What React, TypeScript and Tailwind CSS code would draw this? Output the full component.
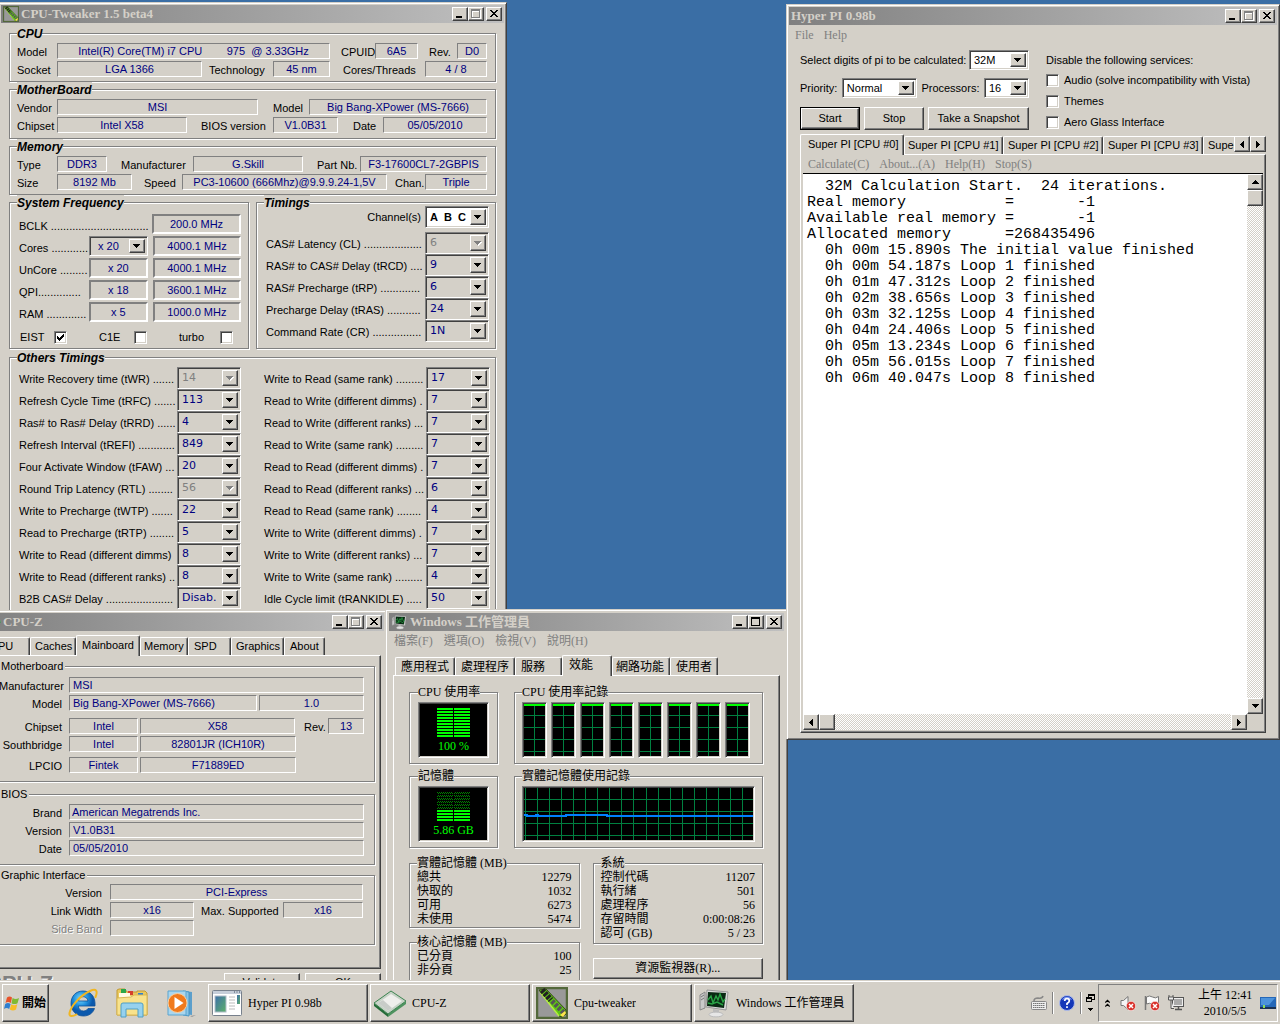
import React from "react";
import clsx from "clsx";

const RAISED = "bg-[#d4d0c8] border border-t-white border-l-white border-r-[#404040] border-b-[#404040] shadow-[inset_-1px_-1px_0_#808080]";
const SUNKEN = "border border-t-[#808080] border-l-[#808080] border-r-white border-b-white";
const DEEP = "border border-t-[#808080] border-l-[#808080] border-r-white border-b-white shadow-[inset_1px_1px_0_#404040,inset_-1px_-1px_0_#d4d0c8]";
const SANS = "font-['Liberation_Sans','Noto_Sans_CJK_TC',sans-serif]";
const SERIF = "font-['Liberation_Serif','Noto_Sans_CJK_TC',serif]";

interface WithChildren {
    children?: React.ReactNode;
    className?: string;
}

/* ---------- window parts ---------- */

interface WindowProps extends WithChildren {
    title: string;
    icon?: React.ReactNode;
    canMaximize?: boolean;
}

function TitleButton({ label, dim, children }: { label: string; dim?: boolean; children: React.ReactNode }) {
    return (
        <button aria-label={label} disabled={dim} className={clsx("h-3.5 w-4 shrink-0", RAISED)}>
            <svg viewBox="0 0 14 12" className="block h-3 w-3.5" shapeRendering="crispEdges">{children}</svg>
        </button>
    );
}

function Window({ title, icon, canMaximize, className, children }: WindowProps) {
    return (
        <section className={clsx("absolute flex flex-col border border-t-[#d4d0c8] border-l-[#d4d0c8] border-r-[#404040] border-b-[#404040] bg-[#d4d0c8] shadow-[inset_1px_1px_0_#fff,inset_-1px_-1px_0_#808080]", className)}>
            <header className={clsx("flex h-[18px] shrink-0 items-center bg-linear-to-r from-[#808080] to-[#c0c0c0] px-0.5 text-[#d4d0c8]", SERIF)}>
                {icon}
                <h2 className="flex-1 truncate text-[13px] leading-[18px] font-bold">{title}</h2>
                <TitleButton label="Minimize"><path d="M3 8h6v2H3z" /></TitleButton>
                <TitleButton label="Maximize" dim={!canMaximize}>
                    {canMaximize ? (
                        <path d="M2 1h9v9H2zM3 3v6h7V3z" fillRule="evenodd" />
                    ) : (
                        <>
                            <path d="M3 2h9v9H3zM4 4v6h7V4z" fillRule="evenodd" fill="#fff" />
                            <path d="M2 1h9v9H2zM3 3v6h7V3z" fillRule="evenodd" fill="#808080" />
                        </>
                    )}
                </TitleButton>
                <span className="w-0.5" />
                <TitleButton label="Close">
                    <path d="M3 2h2v1h1v1h2V3h1V2h2v1h-1v1H9v1H8v1h1v1h1v1h1v1H9V8H8V7H6v1H5v1H3V8h1V7h1V6h1V5H5V4H4V3H3z" />
                </TitleButton>
            </header>
            {children}
        </section>
    );
}

function Group({ title, heading, className, children }: WithChildren & { title: string; heading?: string }) {
    return (
        <fieldset className={clsx("min-w-0 border border-[#808080] shadow-[inset_1px_1px_0_#fff,1px_1px_0_#fff]", className)}>
            <legend className={clsx("h-3.5 bg-[#d4d0c8] whitespace-nowrap", heading ?? "px-0.5 leading-3.5")}>{title}</legend>
            {children}
        </fieldset>
    );
}

const ETCHED_HEADING = "text-xs leading-4 font-bold italic";

function Tabs({ items, active, className, sizes }: { items: string[]; active: string; className?: string; sizes: string[] }) {
    return (
        <div role="tablist" className={clsx("flex items-end", className)}>
            {items.map((item, i) => (
                <button
                    key={item}
                    role="tab"
                    aria-selected={item === active}
                    className={clsx(
                        "shrink-0 rounded-t-[2px] border border-b-0 border-t-white border-l-white border-r-[#404040] bg-[#d4d0c8] text-left whitespace-nowrap shadow-[inset_-1px_0_0_#808080]",
                        item === active ? "relative z-10 -mb-px h-[21px] pb-0.5" : "h-[18px]",
                        sizes[i]
                    )}
                >
                    {item}
                </button>
            ))}
        </div>
    );
}

const TAB_PANEL = "border border-t-white border-l-white border-r-[#404040] border-b-[#404040] shadow-[inset_-1px_-1px_0_#808080]";

interface FieldProps {
    label: string;
    value: string;
    caption: string;
    box: string;
    dim?: boolean;
}

function Field({ label, value, caption, box, dim }: FieldProps) {
    return (
        <label className={clsx("flex h-4 items-center", box.includes("flex-1") && "min-w-0 flex-1")}>
            <span className={clsx("shrink-0 pt-0.5 leading-3.5 whitespace-nowrap", caption, dim && "text-[#808080] [text-shadow:1px_1px_0_#fff]")}>{label}</span>
            <input readOnly value={value} className={clsx("h-4 min-w-0 text-[#000080]", SUNKEN, box)} />
        </label>
    );
}

interface ComboProps {
    value: string;
    label?: string;
    disabled?: boolean;
    className?: string;
    id?: string;
}

function Combo({ value, label, disabled, className, id }: ComboProps) {
    return (
        <span className={clsx("flex shrink-0 p-0.5", DEEP, className)}>
            <select id={id} aria-label={label} disabled={disabled} className={clsx("min-w-0 flex-1 appearance-none px-0.5 leading-3.5 outline-none", disabled && "text-[#808080]")}>
                <option>{value}</option>
            </select>
            <span className={clsx("pointer-events-none flex w-4 items-center justify-center", RAISED)}>
                <svg viewBox="0 0 8 5" className="h-[5px] w-2" shapeRendering="crispEdges">
                    {disabled && <path d="M1 1h7v1H7v1H6v1H5v1H4V4H3V3H2V2H1z" fill="#fff" />}
                    <path d="M0 0h7v1H6v1H5v1H4v1H3V3H2V2H1V1H0z" fill={disabled ? "#808080" : "#000"} />
                </svg>
            </span>
        </span>
    );
}

function CheckBox({ id, checked }: { id: string; checked?: boolean }) {
    return (
        <span className={clsx("relative size-[13px] shrink-0 bg-white", DEEP)}>
            <input id={id} type="checkbox" defaultChecked={checked} className="peer block size-full appearance-none outline-none" />
            <svg viewBox="0 0 7 7" className="pointer-events-none absolute top-0.5 left-0.5 hidden size-[7px] peer-checked:block" shapeRendering="crispEdges">
                <path d="M0 2h1v1h1v1h1V3h1V2h1V1h1V0h1v3H6v1H5v1H4v1H3v1H2V6H1V5H0z" />
            </svg>
        </span>
    );
}

/* ---------- icons ---------- */

function RamIcon({ className }: { className?: string }) {
    return (
        <svg viewBox="0 0 32 32" className={clsx("shrink-0", className)}>
            <rect x="1" y="1" width="30" height="30" fill="#999" stroke="#53683a" strokeWidth="2.5" />
            <path d="M3 3l7-1 20 21 0 4-4 3-3-1z" fill="#5fc615" stroke="#354a16" />
            <path d="M4 5l19 24" stroke="#b6f340" strokeWidth="1.5" />
            <path d="M6 3l9 10" stroke="#222" strokeWidth="6" strokeDasharray="3 1" />
            <path d="M16 14l12 12" stroke="#555" strokeWidth="5" strokeDasharray="3 1.500" />
            <path d="M24 28l5-4 1 2-3 4z" fill="#ffe34d" />
        </svg>
    );
}

function MonitorIcon({ className }: { className?: string }) {
    return (
        <svg viewBox="0 0 32 32" className={clsx("shrink-0", className)}>
            <path d="M2 8l5-3v16l-5 2z" fill="#c9c9c9" stroke="#888" />
            <path d="M3 10l3-2M3 13l3-2" stroke="#777" />
            <path d="M9 3l21 2-2 18-20-3z" fill="#ddd" stroke="#999" />
            <path d="M10 5l18 1-2 15-17-2z" fill="#092a13" />
            <path d="M10 13l3-4 2 7 3-7 2 4 2-6 3 8 2-3M10 16l4 1 5-2 6 3" fill="none" stroke="#29a445" strokeWidth="1.4" />
            <path d="M15 22l6 1v3h-6z" fill="#bbb" />
            <ellipse cx="18" cy="27.500" rx="7" ry="2.400" fill="#e6e6e6" stroke="#bbb" />
        </svg>
    );
}

function ChipIcon({ className }: { className?: string }) {
    return (
        <svg viewBox="0 0 32 32" className={clsx("shrink-0", className)}>
            <path d="M0 16l14 11v3L0 19z" fill="#256b38" />
            <path d="M14 27l18-13v3L14 30z" fill="#4f9360" />
            <path d="M0 16L17 4l15 10-18 13z" fill="#c6d2c6" stroke="#3c8450" />
            <path d="M4 16l13-9 11 7-14 10z" fill="#efefec" />
            <path d="M4 16l10 8 4-3-9-8z" fill="#c8ccc8" />
        </svg>
    );
}

function AppWindowIcon() {
    return (
        <svg viewBox="0 0 30 26" className="h-[26px] w-[30px] shrink-0">
            <rect x="0.5" y="0.5" width="29" height="25" rx="1" fill="#fff" stroke="#77808c" />
            <path d="M1 1h28v3H1z" fill="#c6ced9" />
            <path d="M22 2h1M24.500 2h1M27 2h1" stroke="#39495f" />
            <linearGradient id="app" x2="1" y2="1"><stop stopColor="#3d6fa9" /><stop offset="1" stopColor="#5db06a" /></linearGradient>
            <rect x="3" y="6" width="11" height="16" fill="url(#app)" stroke="#b0bcc8" />
            <path d="M17 7h6M17 10h6M17 13h6M17 16h6M17 19h6" stroke="#bbb" />
            <rect x="25" y="5" width="3" height="9" fill="url(#app)" />
        </svg>
    );
}

function StartFlag() {
    return (
        <svg viewBox="0 0 16 16" className="size-4 shrink-0">
            <path d="M3 2.500q2.500-2 5 0L6.800 8Q4 6.200 1.500 8z" fill="#e8532a" />
            <path d="M8.600 3q3 2 6.400 0l-1.500 5.200Q10.500 10 7.500 8.200z" fill="#7fba32" />
            <path d="M1.200 9q2.800-2 5.400 0L5.200 14q-2.700-2-5.200 0z" fill="#2f7fd0" />
            <path d="M7.300 9.200q3 2 6 0L12 14.500q-3 2-6.200 0z" fill="#f7bd25" />
        </svg>
    );
}

function BrowserIcon() {
    return (
        <svg viewBox="0 0 32 32" className="size-8">
            <radialGradient id="ie" cx=".4" cy=".3"><stop stopColor="#7fdcff" /><stop offset=".6" stopColor="#1e8fdd" /><stop offset="1" stopColor="#0b59ad" /></radialGradient>
            <path d="M16 4C8.500 4 4 9.500 4 16.500S9 29 16.500 29c5.500 0 9.500-3 11-7.500h-6.500c-1 1.700-2.500 2.500-4.500 2.500-3 0-5-2-5.200-5H28C28.700 10 24 4 16 4zm-4.600 10c.5-2.700 2.300-4.300 4.800-4.300s4.400 1.600 4.800 4.300z" fill="url(#ie)" stroke="#0c4f98" strokeWidth=".8" />
            <path d="M28.500 10C31 4 29.500 1 23 4 13 8.500 4 19 2.500 26c-.6 3.500 2.500 4 7 1.500" fill="none" stroke="#f0b622" strokeWidth="2" strokeLinecap="round" />
        </svg>
    );
}

function FolderIcon() {
    return (
        <svg viewBox="0 0 32 32" className="size-8">
            <path d="M1 7V3l2-1h6l2 3h10v-1h8l2 2v22H1z" fill="#e9c95f" stroke="#c39b34" />
            <path d="M5 2h5v4H5z" fill="#2aa84a" />
            <path d="M12 4h5v4h-5z" fill="#d6402c" />
            <path d="M22 6h5v4h-5z" fill="#2c80d3" />
            <path d="M3 6h11v3h15v4H3z" fill="#fffbe4" />
            <path d="M1 11l14-1 3-2h13v20H1z" fill="#f8e28c" stroke="#d8b754" />
            <path d="M5 30V18q0-2 2-2h18q2 0 2 2v12h-5v-8H10v8z" fill="#96d1ee" stroke="#4e9fc6" />
        </svg>
    );
}

function MediaIcon() {
    return (
        <svg viewBox="0 0 32 32" className="size-8">
            <path d="M20 4l7 1v23l-7-1z" fill="#5c9fcb" />
            <path d="M18 4l6 1v24l-6-1z" fill="#8cc6e5" stroke="#4996c4" />
            <path d="M3 4h18v24H3z" fill="#a9d6ee" stroke="#5aa4cf" />
            <circle cx="12.500" cy="16" r="9.500" fill="#f07a1c" stroke="#fbd0a0" />
            <path d="M9.500 10l9 6-9 6z" fill="#fff" />
            <path d="M25 29l6-1-4 2z" fill="#999" />
        </svg>
    );
}

function DeniedBadge() {
    return (
        <g>
            <circle cx="11" cy="11" r="4.700" fill="#d8312b" stroke="#fff" strokeWidth=".6" />
            <path d="M9 9l4 4M13 9l-4 4" stroke="#fff" strokeWidth="1.500" />
        </g>
    );
}

/* ---------- CPU-Tweaker ---------- */

const FREQUENCIES = [
    { name: "Cores", dots: " ............", ratio: "x 20", clock: "4000.1 MHz", pick: true },
    { name: "UnCore", dots: " .........", ratio: "x 20", clock: "4000.1 MHz" },
    { name: "QPI", dots: "..............", ratio: "x 18", clock: "3600.1 MHz" },
    { name: "RAM", dots: " .............", ratio: "x 5", clock: "1000.0 MHz" },
];

interface Timing {
    name: string;
    dots: number;
    value: string;
    locked?: boolean;
}

const MAIN_TIMINGS: Timing[] = [
    { name: "CAS# Latency (CL)", dots: 19, value: "6", locked: true },
    { name: "RAS# to CAS# Delay (tRCD)", dots: 4, value: "9" },
    { name: "RAS# Precharge (tRP)", dots: 13, value: "6" },
    { name: "Precharge Delay (tRAS)", dots: 11, value: "24" },
    { name: "Command Rate (CR)", dots: 16, value: "1N" },
];

const OTHER_LEFT: Timing[] = [
    { name: "Write Recovery time (tWR)", dots: 7, value: "14", locked: true },
    { name: "Refresh Cycle Time (tRFC)", dots: 7, value: "113" },
    { name: "Ras# to Ras# Delay (tRRD)", dots: 6, value: "4" },
    { name: "Refresh Interval (tREFI)", dots: 12, value: "849" },
    { name: "Four Activate Window (tFAW)", dots: 3, value: "20" },
    { name: "Round Trip Latency (RTL)", dots: 8, value: "56", locked: true },
    { name: "Write to Precharge (tWTP)", dots: 7, value: "22" },
    { name: "Read to Precharge (tRTP)", dots: 8, value: "5" },
    { name: "Write to Read (different dimms)", dots: 0, value: "8" },
    { name: "Write to Read (different ranks)", dots: 2, value: "8" },
    { name: "B2B CAS# Delay", dots: 22, value: "Disab." },
];

const OTHER_RIGHT: Timing[] = [
    { name: "Write to Read (same rank)", dots: 9, value: "17" },
    { name: "Read to Write (different dimms)", dots: 1, value: "7" },
    { name: "Read to Write (different ranks)", dots: 3, value: "7" },
    { name: "Read to Write (same rank)", dots: 9, value: "7" },
    { name: "Read to Read (different dimms)", dots: 1, value: "7" },
    { name: "Read to Read (different ranks)", dots: 3, value: "6" },
    { name: "Read to Read (same rank)", dots: 8, value: "4" },
    { name: "Write to Write (different dimms)", dots: 1, value: "7" },
    { name: "Write to Write (different ranks)", dots: 3, value: "7" },
    { name: "Write to Write (same rank)", dots: 9, value: "4" },
    { name: "Idle Cycle limit (tRANKIDLE)", dots: 5, value: "50" },
];

const DEEP_FIELD = "h-5 min-w-0 border-2 border-t-[#808080] border-l-[#808080] border-r-white border-b-white text-center text-[#000080]";

function TimingRow({ name, dots, value, locked }: Timing) {
    return (
        <label className="flex h-[22px] items-center justify-between">
            <span className="pt-0.5 leading-3.5 whitespace-nowrap">{name} {".".repeat(dots)}</span>
            <Combo value={value} disabled={locked} className="h-[22px] w-16 font-['DejaVu_Sans',sans-serif] text-[#000080]" />
        </label>
    );
}

function CpuTweaker() {
    return (
        <Window title="CPU-Tweaker 1.5 beta4" icon={<RamIcon className="mr-0.5 size-4" />} className={clsx("top-0.5 -left-0.5 h-[640px] w-[509px] p-0.5 text-[11px]", SANS)}>
            <div className="flex flex-col px-2 pt-[3px]">
                <Group title="CPU" heading={ETCHED_HEADING} className="pt-[3px] pr-2 pb-1 pl-[7px]">
                    <div className="flex flex-col gap-0.5">
                        <div className="flex">
                            <Field label="Model" value="Intel(R) Core(TM) i7 CPU        975  @ 3.33GHz" caption="w-10" box="flex-1 text-center" />
                            <Field label="CPUID" value="6A5" caption="w-[45px] pl-[11px]" box="w-[43px] text-center" />
                            <Field label="Rev." value="D0" caption="w-[39px] pl-[11px]" box="w-[30px] text-center" />
                        </div>
                        <div className="flex">
                            <Field label="Socket" value="LGA 1366" caption="w-10" box="flex-1 text-center" />
                            <Field label="Technology" value="45 nm" caption="w-[71px] pl-[7px]" box="w-[57px] text-center" />
                            <Field label="Cores/Threads" value="4 / 8" caption="w-[95px] pl-[13px]" box="w-[62px] text-center" />
                        </div>
                    </div>
                </Group>
                <Group title="MotherBoard" heading={ETCHED_HEADING} className="pt-[3px] pr-2 pb-[5px] pl-[7px]">
                    <div className="flex flex-col gap-0.5">
                        <div className="flex">
                            <Field label="Vendor" value="MSI" caption="w-10" box="flex-1 text-center" />
                            <Field label="Model" value="Big Bang-XPower (MS-7666)" caption="w-[51px] pl-[15px]" box="w-[178px] text-center" />
                        </div>
                        <div className="flex">
                            <Field label="Chipset" value="Intel X58" caption="w-10" box="flex-1 text-center" />
                            <Field label="BIOS version" value="V1.0B31" caption="w-[86px] pl-3.5" box="w-[65px] text-center" />
                            <Field label="Date" value="05/05/2010" caption="w-[45px] pl-[15px]" box="w-[104px] text-center" />
                        </div>
                    </div>
                </Group>
                <Group title="Memory" heading={ETCHED_HEADING} className="pt-[3px] pr-2 pb-1 pl-[7px]">
                    <div className="flex flex-col gap-0.5">
                        <div className="flex">
                            <Field label="Type" value="DDR3" caption="w-10" box="w-[50px] text-center" />
                            <Field label="Manufacturer" value="G.Skill" caption="w-[86px] pl-3.5" box="flex-1 text-center" />
                            <Field label="Part Nb." value="F3-17600CL7-2GBPIS" caption="w-[57px] pl-3.5" box="w-[127px] text-center" />
                        </div>
                        <div className="flex">
                            <Field label="Size" value="8192 Mb" caption="w-10" box="w-[75px] text-center" />
                            <Field label="Speed" value="PC3-10600 (666Mhz)@9.9.9.24-1,5V" caption="w-[50px] pl-3" box="flex-1 text-center" />
                            <Field label="Chan." value="Triple" caption="w-[38px] pl-2" box="w-[62px] text-center" />
                        </div>
                    </div>
                </Group>
                <div className="grid grid-cols-[240px_minmax(0,1fr)] gap-[7px]">
                    <Group title="System Frequency" heading={ETCHED_HEADING} className="pt-[5px] pr-[7px] pl-[7px]">
                        <div className="flex flex-col gap-0.5 pl-0.5">
                            <label className="flex items-center justify-between">
                                <span className="pt-1 leading-3.5 whitespace-nowrap">BCLK {".".repeat(32)}</span>
                                <input readOnly value="200.0 MHz" className={clsx("w-[89px]", DEEP_FIELD)} />
                            </label>
                            {FREQUENCIES.map((f) => (
                                <div key={f.name} className="flex items-center">
                                    <span className="w-[70px] shrink-0 pt-1 leading-3.5 whitespace-nowrap">{f.name}{f.dots}</span>
                                    {f.pick ? (
                                        <Combo label={f.name + " ratio"} value={f.ratio} className="mr-[5px] h-5 w-[59px] pl-1.5 text-[#000080]" />
                                    ) : (
                                        <input readOnly aria-label={f.name + " ratio"} value={f.ratio} className={clsx("mr-[5px] w-[59px]", DEEP_FIELD)} />
                                    )}
                                    <input readOnly aria-label={f.name + " clock"} value={f.clock} className={clsx("w-[89px]", DEEP_FIELD)} />
                                </div>
                            ))}
                        </div>
                        <div className="flex h-[26px] items-center justify-between pt-1 pr-2 pl-[3px]">
                            <span className="flex items-center gap-2.5"><label htmlFor="eist">EIST</label><CheckBox id="eist" checked /></span>
                            <span className="flex items-center gap-3.5"><label htmlFor="c1e">C1E</label><CheckBox id="c1e" /></span>
                            <span className="flex items-center gap-4"><label htmlFor="turbo">turbo</label><CheckBox id="turbo" /></span>
                        </div>
                    </Group>
                    <Group title="Timings" heading={ETCHED_HEADING} className="pr-1.5 pl-[7px]">
                        <div className="-mt-[3px] flex items-center justify-end gap-1 pb-1">
                            <label htmlFor="channels" className="leading-3.5">Channel(s)</label>
                            <Combo id="channels" value={"A\u00a0 B\u00a0 C"} className="h-[22px] w-16 bg-white font-bold" />
                        </div>
                        <div className="pl-0.5">
                            {MAIN_TIMINGS.map((t) => <TimingRow key={t.name} {...t} />)}
                        </div>
                    </Group>
                </div>
                <Group title="Others Timings" heading={ETCHED_HEADING} className="mt-px pt-[3px] pr-[5px] pb-2 pl-[7px]">
                    <div className="grid grid-cols-[222px_minmax(0,1fr)] gap-[23px] pl-0.5">
                        <div>{OTHER_LEFT.map((t) => <TimingRow key={t.name} {...t} />)}</div>
                        <div>{OTHER_RIGHT.map((t) => <TimingRow key={t.name} {...t} />)}</div>
                    </div>
                </Group>
            </div>
        </Window>
    );
}

/* ---------- CPU-Z ---------- */

function CpuZ() {
    const right = "w-[70px] pr-[7px] text-right";
    const wide = "w-[111px] pr-2 text-right";
    return (
        <Window title="CPU-Z" icon={<ChipIcon className="mr-0.5 size-4" />} className={clsx("top-[610px] -left-5 h-[394px] w-[407px] p-0.5 text-[11px]", SANS)}>
            <div className="flex flex-col px-[3px] pt-1">
                <Tabs
                    items={["CPU", "Caches", "Mainboard", "Memory", "SPD", "Graphics", "About"]}
                    active="Mainboard"
                    sizes={["w-11 pl-[3px]", "w-[46px] pl-1", "w-16 pl-[5px]", "w-12 pl-[3px]", "w-[43px] pl-[5px]", "w-[53px] pl-1", "w-[41px] pl-[5px]"]}
                />
                <div className={clsx("px-[5px] pt-[3px] pb-[23px]", TAB_PANEL)}>
                    <Group title="Motherboard" className="pt-1 pr-2.5 pb-2 pl-1.5">
                        <div className="flex"><Field label="Manufacturer" value="MSI" caption={right} box="flex-1 pl-[3px]" /></div>
                        <div className="mt-0.5 flex gap-0.5">
                            <Field label="Model" value="Big Bang-XPower (MS-7666)" caption={right} box="flex-1 pl-[3px]" />
                            <input readOnly aria-label="Revision" value="1.0" className={clsx("h-4 w-[105px] text-center text-[#000080]", SUNKEN)} />
                        </div>
                        <div className="mt-[7px] flex">
                            <Field label="Chipset" value="Intel" caption={right} box="w-[69px] text-center" />
                            <input readOnly aria-label="Chipset model" value="X58" className={clsx("ml-0.5 h-4 w-[156px] text-center text-[#000080]", SUNKEN)} />
                            <Field label="Rev." value="13" caption="w-[33px] pl-[9px]" box="w-9 text-center" />
                        </div>
                        <div className="mt-0.5 flex">
                            <Field label="Southbridge" value="Intel" caption={right} box="w-[69px] text-center" />
                            <input readOnly aria-label="Southbridge model" value="82801JR (ICH10R)" className={clsx("ml-0.5 h-4 w-[156px] text-center text-[#000080]", SUNKEN)} />
                        </div>
                        <div className="mt-[5px] flex">
                            <Field label="LPCIO" value="Fintek" caption={right} box="w-[69px] text-center" />
                            <input readOnly aria-label="LPCIO model" value="F71889ED" className={clsx("ml-0.5 h-4 w-[156px] text-center text-[#000080]", SUNKEN)} />
                        </div>
                    </Group>
                    <Group title="BIOS" className="mt-[5px] pt-[3px] pr-2.5 pb-2 pl-1.5">
                        <div className="flex flex-col gap-0.5">
                            <div className="flex"><Field label="Brand" value="American Megatrends Inc." caption={right} box="flex-1 pl-0.5" /></div>
                            <div className="flex"><Field label="Version" value="V1.0B31" caption={right} box="flex-1 pl-[3px]" /></div>
                            <div className="flex"><Field label="Date" value="05/05/2010" caption={right} box="flex-1 pl-[3px]" /></div>
                        </div>
                    </Group>
                    <Group title="Graphic Interface" className="mt-[3px] pt-0.5 pr-[11px] pb-2 pl-1.5">
                        <div className="flex flex-col gap-0.5">
                            <div className="flex"><Field label="Version" value="PCI-Express" caption={wide} box="flex-1 text-center" /></div>
                            <div className="flex justify-between">
                                <Field label="Link Width" value="x16" caption={wide} box="w-[84px] text-center" />
                                <Field label="Max. Supported" value="x16" caption="w-[82px]" box="w-20 text-center" />
                            </div>
                            <div className="flex"><Field label="Side Band" value="" caption={wide} box="w-[84px]" dim /></div>
                        </div>
                    </Group>
                </div>
                <div className="mt-1 flex items-start gap-[5px]">
                    <span className="flex-1 text-[22px] leading-[22px] font-bold text-[#808080] [text-shadow:1px_1px_0_#fff]">CPU-Z</span>
                    <button className={clsx("h-[18px] w-[76px]", RAISED)}>Validate</button>
                    <button className={clsx("h-[18px] w-[76px]", RAISED)}>OK</button>
                </div>
            </div>
        </Window>
    );
}

/* ---------- task manager ---------- */

const SCREEN = clsx("bg-black p-px", DEEP);

function Meter({ lit, text }: { lit: number; text: string }) {
    return (
        <div className={clsx("flex h-14 flex-col items-center bg-black pt-[5px]", DEEP)}>
            <svg viewBox="0 0 34 29" className="h-[29px] w-[34px]" shapeRendering="crispEdges">
                <defs>
                    <pattern id="dim" width="2" height="2" patternUnits="userSpaceOnUse">
                        <path d="M0 0h1v1H0zM1 1h1v1H1z" fill="#008000" />
                    </pattern>
                </defs>
                {Array.from({ length: 10 }, (_, i) => (
                    <path key={i} d={`M0 ${i * 3}h16v2H0zM17 ${i * 3}h16v2H17z`} fill={i >= 10 - lit ? "#0f0" : "url(#dim)"} />
                ))}
            </svg>
            <span className="pt-0.5 leading-3.5 text-[#0f0]">{text}</span>
        </div>
    );
}

function CoreGraph() {
    return (
        <div className={clsx("h-14 w-[25px]", SCREEN)}>
            <svg viewBox="0 0 21 52" className="h-[52px] w-[21px]" shapeRendering="crispEdges">
                <path d="M10.500 0v52M0 11.500h21M0 23.500h21M0 35.500h21M0 47.500h21" stroke="#008040" />
                <path d="M0 1h21" stroke="#0f0" strokeWidth="2" />
            </svg>
        </div>
    );
}

function Stats({ rows }: { rows: string[][] }) {
    return (
        <dl className="leading-3.5">
            {rows.map(([name, value]) => (
                <div key={name} className="flex h-3.5 justify-between">
                    <dt>{name}</dt>
                    <dd>{value}</dd>
                </div>
            ))}
        </dl>
    );
}

function TaskManager() {
    return (
        <Window title="Windows 工作管理員" canMaximize icon={<MonitorIcon className="mr-[3px] size-4" />} className={clsx("top-[609px] left-[385px] h-[400px] w-[403px] p-[3px] text-xs", SERIF)}>
            <nav className="flex h-5 items-center gap-[11px] px-[5px] text-[#808080]">
                <button>檔案(F)</button>
                <button>選項(O)</button>
                <button>檢視(V)</button>
                <button>說明(H)</button>
            </nav>
            <div className="flex flex-col px-1 pt-1">
                <Tabs
                    items={["應用程式", "處理程序", "服務", "效能", "網路功能", "使用者"]}
                    active="效能"
                    className="pl-0.5"
                    sizes={["w-[60px] pl-[5px]", "w-[60px] pl-[5px]", "w-[47px] pl-[5px]", "w-[50px] pl-1.5", "w-[58px] pl-[3px]", "w-12 pl-[5px]"]}
                />
                <div className={clsx("h-[330px] pt-[9px] pr-4 pl-[15px]", TAB_PANEL)}>
                    <div className="grid grid-cols-[89px_1fr] gap-x-4 gap-y-[5px]">
                        <Group title="CPU 使用率" className="px-2 pt-[3px] pb-[5px]" heading="leading-3.5">
                            <Meter lit={10} text="100 %" />
                        </Group>
                        <Group title="CPU 使用率記錄" className="px-[7px] pt-[3px] pb-[5px]" heading="leading-3.5">
                            <div className="flex gap-1">
                                {Array.from({ length: 8 }, (_, i) => <CoreGraph key={i} />)}
                            </div>
                        </Group>
                        <Group title="記憶體" className="px-2 pt-[3px] pb-[5px]" heading="leading-3.5">
                            <Meter lit={4} text="5.86 GB" />
                        </Group>
                        <Group title="實體記憶體使用記錄" className="px-[7px] pt-[3px] pb-[5px]" heading="leading-3.5">
                            <div className={clsx("h-14", SCREEN)}>
                                <svg viewBox="0 0 228 52" className="h-[52px] w-full" preserveAspectRatio="none" shapeRendering="crispEdges">
                                    {Array.from({ length: 19 }, (_, i) => <path key={i} d={`M${i * 12 + 1.5} 0v52`} stroke="#008040" />)}
                                    <path d="M0 11.500h228M0 23.500h228M0 35.500h228M0 47.500h228" stroke="#008040" />
                                    <path d="M0 27h3v1h9v-1h2v1h28v-1h41v1h145" fill="none" stroke="#0080ff" strokeWidth="2" />
                                </svg>
                            </div>
                        </Group>
                    </div>
                    <div className="mt-2 grid grid-cols-2 gap-[13px]">
                        <div className="flex flex-col gap-[7px]">
                            <Group title="實體記憶體 (MB)" className="px-[7px] pb-px" heading="leading-3.5">
                                <Stats rows={[["總共", "12279"], ["快取的", "1032"], ["可用", "6273"], ["未使用", "5474"]]} />
                            </Group>
                            <Group title="核心記憶體 (MB)" className="px-[7px] pb-[5px]" heading="leading-3.5">
                                <Stats rows={[["已分頁", "100"], ["非分頁", "25"]]} />
                            </Group>
                        </div>
                        <div className="flex flex-col gap-3.5">
                            <Group title="系統" className="px-[7px] pb-[3px]" heading="leading-3.5">
                                <Stats rows={[["控制代碼", "11207"], ["執行緒", "501"], ["處理程序", "56"], ["存留時間", "0:00:08:26"], ["認可 (GB)", "5 / 23"]]} />
                            </Group>
                            <button className={clsx("h-[21px] leading-[17px]", RAISED)}>資源監視器(R)...</button>
                        </div>
                    </div>
                </div>
            </div>
        </Window>
    );
}

/* ---------- Hyper PI ---------- */

const LOG = [
    "  32M Calculation Start.  24 iterations.",
    "Real memory           =       -1",
    "Available real memory =       -1",
    "Allocated memory      =268435496",
    "  0h 00m 15.890s The initial value finished",
    "  0h 00m 54.187s Loop 1 finished",
    "  0h 01m 47.312s Loop 2 finished",
    "  0h 02m 38.656s Loop 3 finished",
    "  0h 03m 32.125s Loop 4 finished",
    "  0h 04m 24.406s Loop 5 finished",
    "  0h 05m 13.234s Loop 6 finished",
    "  0h 05m 56.015s Loop 7 finished",
    "  0h 06m 40.047s Loop 8 finished",
].join("\n");

const TRACK = "bg-[repeating-conic-gradient(#fff_0_25%,#d4d0c8_0_50%)] bg-[length:2px_2px]";
const ARROWS = {
    up: "M3 0h1v1h1v1h1v1h1v1H0V3h1V2h1V1h1z",
    down: "M0 0h7v1H6v1H5v1H4v1H3V3H2V2H1V1H0z",
    left: "M3 0h1v7H3V6H2V5H1V4H0V3h1V2h1V1h1z",
    right: "M0 0h1v1h1v1h1v1h1v1H3v1H2v1H1v1H0z",
};

function ArrowButton({ dir, className }: { dir: keyof typeof ARROWS; className?: string }) {
    const tall = dir === "left" || dir === "right";
    return (
        <button aria-label={"Scroll " + dir} className={clsx("flex size-4 shrink-0 items-center justify-center", RAISED, className)}>
            <svg viewBox={tall ? "0 0 4 7" : "0 0 7 4"} className={tall ? "h-[7px] w-1" : "h-1 w-[7px]"} shapeRendering="crispEdges">
                <path d={ARROWS[dir]} />
            </svg>
        </button>
    );
}

function HyperPi() {
    return (
        <Window title="Hyper PI 0.98b" className={clsx("top-1 right-0 h-[736px] w-[494px] p-0.5 text-[11px]", SANS)}>
            <nav className={clsx("flex h-5 shrink-0 items-center gap-2.5 px-1.5 text-xs text-[#808080]", SERIF)}>
                <button>File</button>
                <button>Help</button>
            </nav>
            <div className="flex min-h-0 flex-1 flex-col px-[11px] pt-[5px] pb-1">
                <div className="flex gap-[17px]">
                    <div className="w-[229px]">
                        <div className="flex h-5 items-center justify-between">
                            <label htmlFor="digits">Select digits of pi to be calculated:</label>
                            <Combo id="digits" value="32M" className="h-5 w-[60px] bg-white" />
                        </div>
                        <div className="mt-2 flex h-5 items-center justify-between">
                            <label htmlFor="priority">Priority:</label>
                            <Combo id="priority" value="Normal" className="h-5 w-[75px] bg-white" />
                            <label htmlFor="processors">Processors:</label>
                            <Combo id="processors" value="16" className="h-5 w-[45px] bg-white" />
                        </div>
                        <div className="mt-[9px] flex h-[23px] gap-1">
                            <button className="w-[60px] border border-black"><span className={clsx("flex h-full items-center justify-center", RAISED)}>Start</span></button>
                            <button className={clsx("w-[60px]", RAISED)}>Stop</button>
                            <button className={clsx("flex-1", RAISED)}>Take a Snapshot</button>
                        </div>
                    </div>
                    <div>
                        <p className="h-5 leading-5">Disable the following services:</p>
                        {["Audio (solve incompatibility with Vista)", "Themes", "Aero Glass Interface"].map((name) => (
                            <div key={name} className="flex h-[21px] items-center gap-[5px] whitespace-nowrap">
                                <CheckBox id={name} />
                                <label htmlFor={name}>{name}</label>
                            </div>
                        ))}
                    </div>
                </div>
                <div className="mt-px flex items-end">
                    <Tabs
                        items={["Super PI [CPU #0]", "Super PI [CPU #1]", "Super PI [CPU #2]", "Super PI [CPU #3]", "Super PI [CPU #4]"]}
                        active="Super PI [CPU #0]"
                        className="min-w-0 flex-1 overflow-x-clip"
                        sizes={["w-[104px] pl-[7px]", "w-[99px] pl-[3px]", "w-[100px] pl-1", "w-[100px] pl-1", "w-[100px] pl-1"]}
                    />
                    <ArrowButton dir="left" className="mb-0.5" />
                    <ArrowButton dir="right" className="mb-0.5" />
                </div>
                <div className={clsx("flex min-h-0 flex-1 flex-col px-0.5 pb-0.5", TAB_PANEL)}>
                    <nav className={clsx("flex h-[18px] shrink-0 items-center gap-2.5 px-[5px] text-xs text-[#808080]", SERIF)}>
                        <button>Calculate(C)</button>
                        <button>About...(A)</button>
                        <button>Help(H)</button>
                        <button>Stop(S)</button>
                    </nav>
                    <div className="flex min-h-0 flex-1 border-t border-black">
                        <textarea
                            readOnly
                            aria-label="Calculation log"
                            wrap="off"
                            value={LOG}
                            className="flex-1 resize-none overflow-hidden bg-white pt-[5px] pl-1 font-['Liberation_Mono',monospace] text-[15px] leading-4 text-black outline-none"
                        />
                        <div className={clsx("flex w-4 flex-col", TRACK)}>
                            <ArrowButton dir="up" />
                            <span className={clsx("size-4", RAISED)} />
                            <ArrowButton dir="down" className="mt-auto" />
                        </div>
                    </div>
                    <div className={clsx("mr-4 flex h-4 shrink-0", TRACK)}>
                        <ArrowButton dir="left" />
                        <span className={clsx("size-4", RAISED)} />
                        <ArrowButton dir="right" className="ml-auto" />
                    </div>
                </div>
            </div>
        </Window>
    );
}

/* ---------- taskbar ---------- */

function TaskButton({ icon, children }: { icon: React.ReactNode; children: React.ReactNode }) {
    return (
        <button className={clsx("flex h-[38px] max-w-40 min-w-0 flex-1 items-center gap-1.5 px-[3px]", RAISED)}>
            {icon}
            <span className="truncate">{children}</span>
        </button>
    );
}

function Separator() {
    return <span className="h-[22px] w-0.5 shrink-0 border-r border-l border-r-white border-l-[#808080]" />;
}

function Taskbar() {
    return (
        <footer className={clsx("relative flex h-11 shrink-0 items-center border-t border-[#d4d0c8] bg-[#d4d0c8] px-0.5 pt-px text-xs shadow-[inset_0_1px_0_#fff]", SERIF)}>
            <button className={clsx("flex h-[38px] w-[47px] shrink-0 items-center gap-0.5 px-px font-bold", RAISED)}>
                <StartFlag />
                開始
            </button>
            <div className="flex shrink-0 gap-[17px] pr-[11px] pl-[18px]">
                <button aria-label="Internet Explorer"><BrowserIcon /></button>
                <button aria-label="Explorer"><FolderIcon /></button>
                <button aria-label="Media Player"><MediaIcon /></button>
            </div>
            <div className="flex min-w-0 flex-1 gap-0.5">
                <TaskButton icon={<AppWindowIcon />}>Hyper PI 0.98b</TaskButton>
                <TaskButton icon={<ChipIcon className="size-8" />}>CPU-Z</TaskButton>
                <TaskButton icon={<RamIcon className="size-8" />}>Cpu-tweaker</TaskButton>
                <TaskButton icon={<MonitorIcon className="size-8" />}>Windows 工作管理員</TaskButton>
            </div>
            <div className="flex shrink-0 items-center gap-1 pr-0.5">
                <svg viewBox="0 0 17 16" className="h-4 w-[17px]">
                    <path d="M3 6q0-3 4-3 4 1 5-2" fill="none" stroke="#888" strokeWidth="1.500" />
                    <rect x=".5" y="6.500" width="15" height="8" rx="1" fill="#eee" stroke="#888" />
                    <path d="M2 8.500h12M2 10.500h12M2 12.500h12" stroke="#777" strokeDasharray="1.500 .5" />
                </svg>
                <Separator />
                <svg viewBox="0 0 18 18" className="size-[18px]">
                    <circle cx="9" cy="9" r="7.500" fill="#1437b8" stroke="#aebce8" />
                    <path d="M4 6a5.500 5.500 0 0 1 10 0q-5-2-10 0z" fill="#7591ee" />
                    <path d="M6.700 7q0-2.300 2.300-2.300T11.300 7Q11.300 8.300 9 9.500V11M9 12.300v1.700" fill="none" stroke="#fff" strokeWidth="1.700" />
                </svg>
                <Separator />
                <svg viewBox="0 0 10 18" className="h-[18px] w-2.5" shapeRendering="crispEdges">
                    <path d="M2 0h7v6H6V5h2V2H3v1H2z" />
                    <path d="M0 3h6v5H0zM1 5v2h4V5z" fillRule="evenodd" />
                    <path d="M2 14h5v1H6v1H5v1H4v-1H3v-1H2z" />
                </svg>
            </div>
            <div className={clsx("flex h-[38px] shrink-0 items-center gap-2 pr-px pl-1.5", SUNKEN)}>
                <button aria-label="Show hidden icons">
                    <svg viewBox="0 0 5 9" className="h-[9px] w-[5px]"><path d="M.3 3.500L2.500 1.300l2.200 2.200M.3 7.500l2.200-2.200 2.200 2.200" fill="none" stroke="#000" strokeWidth="1.200" /></svg>
                </button>
                <svg viewBox="0 0 16 16" className="ml-0.5 size-4">
                    <path d="M1 5.500h2.500L8 1.500v13l-4.500-4H1z" fill="#f6f6f6" stroke="#777" />
                    <DeniedBadge />
                </svg>
                <svg viewBox="0 0 16 16" className="size-4">
                    <path d="M1.500 1v14" stroke="#777" strokeWidth="1.500" />
                    <path d="M2.500 2q3-2 6 0t6-.5v7q-3 2-6 .5t-6 0z" fill="#fafafa" stroke="#777" />
                    <DeniedBadge />
                </svg>
                <svg viewBox="0 0 16 16" className="size-4">
                    <rect x="4.500" y="2.500" width="11" height="9" fill="#eee" stroke="#555" />
                    <rect x="6" y="4" width="8" height="6" fill="#aaa" />
                    <path d="M7 14.500h7M10.500 12v2" stroke="#555" strokeWidth="1.500" />
                    <path d="M1 0v2M5 0v2M.5 2h5v3h-5zM3 5v8.500h3" fill="#eee" stroke="#555" />
                </svg>
                <time className="ml-1.5 w-[54px] text-center leading-4 whitespace-nowrap">
                    上午 12:41<br />2010/5/5
                </time>
                <svg viewBox="0 0 16 14" className="h-3.5 w-4">
                    <path d="M0 1h16v11H0z" fill="#2568b8" />
                    <path d="M1 2h14L9 9H1z" fill="#4c93dc" />
                    <path d="M0 11h16v2H0z" fill="#1b3355" />
                    <path d="M3 9h2v3H3z" fill="#8cdc5c" />
                </svg>
            </div>
        </footer>
    );
}

export default function App() {
    return (
        <div className="flex h-screen flex-col overflow-hidden bg-[#3a6ea5] text-black select-none">
            <main className="relative min-h-0 flex-1 overflow-hidden">
                <CpuTweaker />
                <CpuZ />
                <TaskManager />
                <HyperPi />
            </main>
            <Taskbar />
        </div>
    );
}
